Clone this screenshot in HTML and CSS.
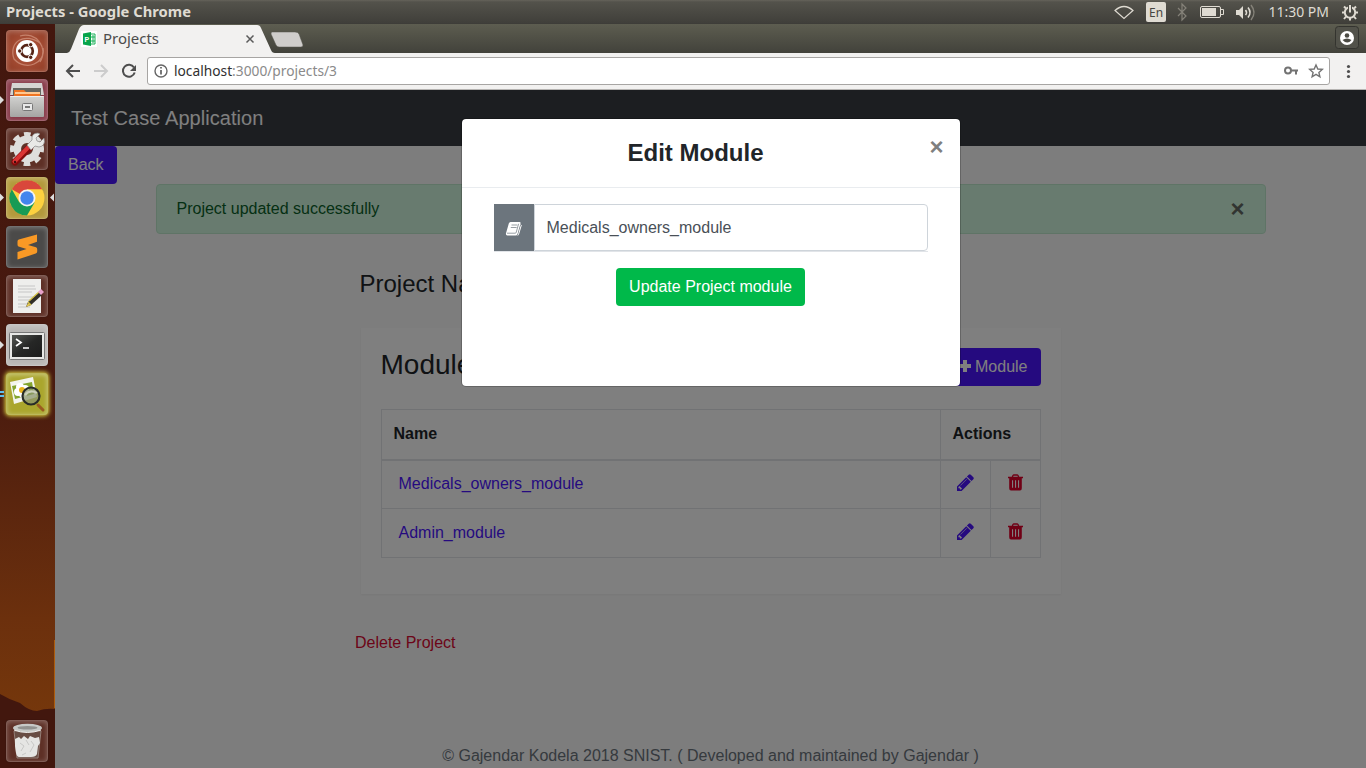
FILE: index.html
```html
<!DOCTYPE html>
<html lang="en">
<head>
<meta charset="utf-8">
<title>Projects</title>
<link rel="stylesheet" href="styles.css">
</head>
<body>
<svg class="defs" width="0" height="0" aria-hidden="true">
  <defs>
    <linearGradient id="steel" x1="0" y1="0" x2="0" y2="1"><stop offset="0" stop-color="#d2d2d0"/><stop offset="1" stop-color="#a5a5a3"/></linearGradient>
    <linearGradient id="term" x1="0" y1="0" x2="1" y2="1"><stop offset="0" stop-color="#555753"/><stop offset=".5" stop-color="#262726"/><stop offset="1" stop-color="#1c1c1c"/></linearGradient>
    <symbol id="pencil" viewBox="0 0 1536 1536"><path transform="translate(0,1408) scale(1,-1)" d="M363 0l91 91l-235 235l-91 -91v-107h128v-128h107zM886 928q0 22 -22 22q-10 0 -17 -7l-542 -542q-7 -7 -7 -17q0 -22 22 -22q10 0 17 7l542 542q7 7 7 17zM832 1120l416 -416l-832 -832h-416v416zM1515 1024q0 -53 -37 -90l-166 -166l-416 416l166 165q36 38 90 38q53 0 91 -38l235 -234q37 -39 37 -91z"/></symbol>
    <symbol id="bin" viewBox="0 0 15 17"><path d="M0 3.500h15M4.200 3.200L5 1.600q.2-.6 1-.6h3q.8 0 1 .6l.8 1.600" fill="none" stroke="#e0002b" stroke-width="1.300"/><path d="M1.200 4h12.600v10.200q0 2.300-1.800 2.300H3q-1.800 0-1.800-2.300zM4 6.200v7.600h1.100V6.200zm3 0v7.600h1.100V6.200zm3 0v7.600h1.100V6.200z" fill-rule="evenodd"/></symbol>
  </defs>
</svg>
<div class="desktop">
  <header class="panel">
    <span class="panel-title"><svg width="185" height="24"><text x="0" y="17" textLength="185" lengthAdjust="spacingAndGlyphs">Projects - Google Chrome</text></svg></span>
    <svg class="indicators" width="252" height="24" viewBox="1114 0 252 24" fill="none" stroke="#dfdbd2">
      <path d="M1115 10.500Q1124 2.500 1133 10.500L1124 18.500Z" stroke-width="1.200"/>
      <rect x="1146" y="2" width="20" height="20" rx="2" fill="#dfdbd2" stroke="none"/>
      <text class="lang" x="1149" y="17" textLength="14" lengthAdjust="spacingAndGlyphs">En</text>
      <path d="M1178 8l8 8-4 4V4l4 4-8 8" stroke="#858279" stroke-width="1.200"/>
      <rect x="1200.500" y="6.500" width="20" height="11" rx="1.500"/><rect x="1202" y="8" width="14" height="8" fill="#dfdbd2" stroke="none"/><path d="M1221 9.500h2.500v5H1221"/>
      <path d="M1236 10h3l4-4v13l-4-4h-3z" fill="#dfdbd2" stroke="none"/>
      <path d="M1245.500 10q2 2.500 0 5M1248 7.500q4 5 0 10" stroke-width="1.600"/><path d="M1251 5q6 7.500 0 15" stroke="#858279" stroke-width="1.500"/>
      <text class="clock" x="1268.500" y="17" textLength="60.500" lengthAdjust="spacingAndGlyphs">11:30 PM</text>
      <circle cx="1350" cy="12.500" r="5.200" stroke-width="2"/><path d="M1350 17.500v3M1346 16.500l-2 2.500M1354 16.500l2 2.500M1345 12.500h-3M1355 12.500h3M1346 8.500l-2-2M1354 8.500l2-2" stroke-width="2"/><path d="M1350 4.500v6" stroke="#4b4a44" stroke-width="4"/><path d="M1350 5v7.500" stroke-width="2"/>
    </svg>
  </header>
  <div class="workspace">
    <nav class="launcher" aria-label="Launcher">
      <svg class="mountain" width="55" height="744" viewBox="0 24 55 744"><path d="M0 694Q10 700 20 703Q29 711 37 711Q46 708 55 709V768H0Z" fill="#42170e"/><path d="M54.500 640V708" stroke="#ad5b0c"/></svg>
      <div class="tile ubuntu"><svg viewBox="0 0 42 42"><g fill="none" stroke="#e9b8a4" stroke-opacity=".5"><path d="M8 29C2 12 19 1 35 14M14 6C30 1 43 18 34 32M37 18C40 33 20 42 8 29" stroke-width="1.300"/></g><circle cx="21" cy="21" r="11" fill="#fff"/><circle cx="21" cy="21" r="5.800" fill="none" stroke="#562315" stroke-width="2.700"/><g fill="#562315" stroke="#fff"><circle cx="13.700" cy="21" r="2.200"/><circle cx="24.700" cy="14.700" r="2.200"/><circle cx="24.700" cy="27.300" r="2.200"/></g></svg></div>
      <div class="tile files"><svg viewBox="0 0 42 42"><path d="M6 4h30l2 12H4z" fill="#d5d5d3"/><path d="M7 9h28v9H7z" fill="#65655f"/><path d="M8 11h10l2 2h14v5H8z" fill="#ef7422"/><path d="M9 14h25" stroke="#ffc890" stroke-width="2"/><path d="M4 17h34v20q0 1-1 1H5q-1 0-1-1z" fill="url(#steel)"/><path d="M4.500 17.500h33" stroke="#eee"/><rect x="16.500" y="24.500" width="10" height="7" rx="1" fill="#e8e8e8" stroke="#777"/><path d="M19 28h5" stroke="#777" stroke-width="2"/></svg></div>
      <div class="tile settings"><svg viewBox="0 0 42 42"><circle cx="21" cy="21" r="14.800" fill="none" stroke="#dddddb" stroke-width="4.500" stroke-dasharray="6.500 5.124" transform="rotate(-13 21 21)"/><circle cx="21" cy="21" r="9.700" fill="none" stroke="#dededc" stroke-width="7.500"/><path d="M9 34L24 19" stroke="#830b0b" stroke-width="7" stroke-linecap="round"/><path d="M8.500 33.500L23 18.500" stroke="#da3434" stroke-width="4" stroke-linecap="round"/><path d="M21 17l5-5q-1-7 6-7l2 1-4 4 1 3 3 1 4-4q2 8-5 9l-4-1-4 4z" fill="#e9e9e7" stroke="#888" stroke-width=".7"/><circle cx="9" cy="34" r="1.200" fill="#3d0d0d"/></svg></div>
      <div class="tile chrome"><svg viewBox="0 0 42 42"><circle cx="21" cy="21" r="17.500" fill="#fdd13f"/><path d="M21 21L5.800 12.200A17.500 17.500 0 0 1 36.200 12.200H21z" fill="#d9473b"/><path d="M5.800 12.200A17.500 17.500 0 0 0 21 38.500L28.600 25.400 13.400 25.400z" fill="#179b55"/><circle cx="21" cy="21" r="8.500" fill="#f4f4f3"/><circle cx="21" cy="21" r="6.700" fill="#4285ed"/></svg></div>
      <div class="tile sublime"><svg viewBox="0 0 42 42"><path d="M11.500 15.500q0-1.400 1.300-1.900L31 8.500v7.300l-9 3.200 8 2.300q1.200.5 1.200 2v2.200q0 1.500-1.500 2.100L11.500 33.500V26l9-3-8-2.500q-1-.5-1-2z" fill="#f99925"/></svg></div>
      <div class="tile editor"><svg viewBox="0 0 42 42"><path d="M7 4h28v34H7z" fill="#eeeeec"/><path d="M12 11h17M12 14h18M12 17h14M12 22h17M12 25h16M12 29h13M12 32h12" stroke="#c6c6c6"/><path d="M20 32l2-5 11-10 3 3-11 10z" fill="#302d27"/><path d="M22 27l3 3M23 26l10-9" stroke="#d3bf44" stroke-width="1.300"/><path d="M20 32l2-4 3 2z" fill="#e2c653"/><path d="M32 17l3-3 3 3-3 3z" fill="#e8a2ca"/></svg></div>
      <div class="tile terminal"><svg viewBox="0 0 42 42"><rect x="3.500" y="8.500" width="35" height="27" rx="1" fill="#e7e7e5" stroke="#777"/><rect x="6" y="11" width="30" height="22" fill="url(#term)"/><path d="M10 15l5 3.500-5 3.500M17 24h6" fill="none" stroke="#fff" stroke-width="1.700"/></svg></div>
      <div class="tile viewer"><svg viewBox="0 0 42 42"><path d="M4 9l23-5 4 20-23 7z" fill="#f3f4ed"/><path d="M6 13l20-4 2 12-19 5z" fill="#84a52f"/><g fill="#fff"><circle cx="14" cy="14" r="4"/><circle cx="19" cy="16" r="4"/><circle cx="12" cy="19" r="4"/><circle cx="17" cy="21" r="4"/></g><circle cx="16" cy="17" r="3" fill="#e7b21b"/><path d="M32 32l5 5" stroke="#9a5b20" stroke-width="3" stroke-linecap="round"/><circle cx="25" cy="23" r="8.500" fill="#8b956e" fill-opacity=".75" stroke="#282c28" stroke-width="2.200"/><path d="M19 22q5-6 12-2" fill="none" stroke="#ccd0bb" stroke-width="2"/></svg></div>
      <div class="tile trash"><svg viewBox="0 0 42 42"><path d="M8 11h27l-3 27H11z" fill="#684d44" stroke="#947e76"/><path d="M9 19l4-2 2 2 3-3 4 3 2-3 5 2 4-1 1 6-2 3-1 8q-1 3-6 3H13q-2 0-3-4l-1-7z" fill="#e5e5e3"/><path d="M14 23l4 3-3 5M25 21l3 4-4 7M16 35l4-2M20 20l3 5" fill="none" stroke="#c8c8c6"/><ellipse cx="21.500" cy="8" rx="14.500" ry="4.200" fill="#c7c9c6"/><ellipse cx="21.500" cy="7.700" rx="10" ry="1.700" fill="#92928f"/><path d="M8 10q13 5 27 0" fill="none" stroke="#f0f0ee"/></svg></div>
      <svg class="markers" width="55" height="744" viewBox="0 24 55 744"><path fill="#dedede" d="M0 96l4 4-4 4zM0 193.500l4 4-4 4zM54 193.500l-4 4 4 4zM0 341l4 4-4 4z"/><path d="M0 391h4v2H0zM0 395h4v2H0z" fill="#5fc0f0"/></svg>
    </nav>
    <main class="browser">
      <div class="tabstrip">
        <svg width="1311" height="29" viewBox="55 24 1311 29"><path d="M67 53Q70 52 71 49L79 29Q81 25 84 25H257Q260 25 261 28L271 50Q272 53 275 53Z" fill="#f2f1f0"/><path d="M272 32H295Q298 32 299 34L303 45Q303 47 301 47H279Q277 47 276 45L271 34Q271 32 272 32Z" fill="#cfcdcb" stroke="#55554c" stroke-width=".5"/>
          <path d="M81 31h16v16H81z" fill="#fff"/><path d="M90 34h5v10h-5z" fill="#fff" stroke="#19af57"/><path d="M91 37h4M91 41h4M93 35v8" stroke="#19af57"/><path d="M83 33.500l8-1.500v14l-8-1.500z" fill="#08a54b"/><text class="fav-letter" x="84.500" y="42">P</text>
          <text class="tab-title" x="103" y="44" textLength="56" lengthAdjust="spacingAndGlyphs">Projects</text><path d="M246.500 35.500l7 7m0-7l-7 7" stroke="#5b5b5b" stroke-width="1.500"/>
          <rect x="1335.500" y="26.500" width="23" height="22" rx="3" fill="#52524a" stroke="#34342f"/><circle cx="1347" cy="38" r="7" fill="#fff"/><circle cx="1347" cy="35.500" r="2.300" fill="#4c4b44"/><path d="M1342.500 40q4.500-3 9 0-4 5-9 0" fill="#4c4b44"/></svg>
      </div>
      <div class="toolbar">
        <svg class="nav-icons" width="92" height="37" viewBox="55 53 92 37" fill="none" stroke="#4e4e4e" stroke-width="2"><path d="M80 71H67m6-6l-6 6 6 6"/><path d="M94 71h13m-6-6l6 6-6 6" stroke="#ccc"/><path d="M134 67.500a6 6 0 1 0 .7 5"/><path d="M136 65v6h-6z" fill="#4e4e4e" stroke="none"/></svg>
        <div class="address">
          <svg width="1180" height="26" viewBox="148 58 1180 26"><circle cx="161" cy="71" r="6" fill="none" stroke="#666" stroke-width="1.400"/><path d="M161 70v4.500M161 67v1.600" stroke="#555" stroke-width="1.600"/><text class="url" x="174" y="76" textLength="163" lengthAdjust="spacingAndGlyphs"><tspan class="host">localhost</tspan>:3000/projects/3</text><path fill="none" stroke="#737373" stroke-width="2" d="M1291 70.500h7m-2 0v4m-5-4a3 3 0 1 1-6 0a3 3 0 0 1 6 0"/><path d="M1316 65l1.800 4 4.500.4-3.400 3 1 4.400-3.900-2.400-3.900 2.400 1-4.400-3.400-3 4.500-.4z" fill="none" stroke="#737373" stroke-width="1.400"/></svg>
        </div>
        <svg class="menu" width="36" height="37"><circle cx="18.500" cy="13.500" r="1.600"/><circle cx="18.500" cy="18.500" r="1.600"/><circle cx="18.500" cy="23.500" r="1.600"/></svg>
      </div>
      <section class="page">
        <div class="navbar">Test Case Application</div>
        <a class="button back">Back</a>
        <div class="alert"><span>Project updated successfully</span><b>×</b></div>
        <h4 class="project-name">Project Name</h4>
        <div class="card">
          <div class="card-head"><h3>Modules</h3><a class="button add"><svg width="13" height="14"><path d="M4 0h4v4h4v4H8v4H4V8H0V4h4z" fill="#fff"/></svg>Module</a></div>
          <table class="modules">
            <thead><tr><th class="name-col">Name</th><th colspan="2">Actions</th></tr></thead>
            <tbody>
              <tr><td><a>Medicals_owners_module</a></td><td class="action"><svg class="edit" width="17" height="17"><use href="#pencil"/></svg></td><td class="action"><svg class="delete" width="15" height="17"><use href="#bin"/></svg></td></tr>
              <tr><td><a>Admin_module</a></td><td class="action"><svg class="edit" width="17" height="17"><use href="#pencil"/></svg></td><td class="action"><svg class="delete" width="15" height="17"><use href="#bin"/></svg></td></tr>
            </tbody>
          </table>
        </div>
        <a class="delete-project">Delete Project</a>
        <footer>© Gajendar Kodela 2018 SNIST. ( Developed and maintained by Gajendar )</footer>
        <div class="backdrop">
          <div class="modal" role="dialog">
            <div class="modal-head"><h4>Edit Module</h4><button class="close" aria-label="Close">×</button></div>
            <div class="modal-body">
              <div class="field"><span class="field-icon"><svg width="17" height="16" viewBox="0 0 17 16"><path d="M5.500 1h9q1.400 0 1 1.400L12.500 13q-.4 1.500-2 1.500H2.300Q.5 14 1 12.200L3.800 2.500Q4.300 1 5.500 1z" fill="#fff"/><path d="M6.500 4h5.800M5.800 6.500h5.800M2 12.200h8.200q.8 0 1-.8L13.600 2.800" fill="none" stroke="#6c757d" stroke-width=".7"/><path d="M15.600 3.500l.7.700-2.700 9-.8 1.300" stroke="#fff" fill="none"/></svg></span><input value="Medicals_owners_module" aria-label="Module name"></div>
              <button class="update">Update Project module</button>
            </div>
          </div>
        </div>
      </section>
    </main>
  </div>
</div>
</body>
</html>
```
FILE: styles.css
```css
* { box-sizing: border-box; }
body { margin: 0; overflow: hidden; font: 16px/24px "Liberation Sans", Arial, sans-serif; color: #212529; }
h3, h4 { margin: 0; font-weight: 400; }
.defs { position: absolute; }
.desktop { width: 1366px; height: 768px; display: flex; flex-direction: column; background: #3c160e; }
.panel { height: 24px; padding-left: 6px; display: flex; justify-content: space-between; background: linear-gradient(#65635a 0, #53524b 2px, #403f3a 23px, #3c3b37); font-family: "Noto Sans", sans-serif; }
.panel svg { display: block; }
.panel-title text { fill: #dfdbd2; font-size: 14px; font-weight: 700; }
.panel text { stroke: none; }
.clock { fill: #dfdbd2; font-size: 14px; }
.lang { fill: #454440; font-size: 13px; }
.workspace { display: flex; height: 744px; }
.launcher { position: relative; width: 55px; padding: 6px 0 6px 6px; display: flex; flex-direction: column; gap: 7px; background: linear-gradient(#43170e, #481a0f 48%, #6c300d 80%, #7a3b0b); }
.mountain, .markers { position: absolute; left: 0; top: 0; }
.tile { position: relative; width: 42px; height: 42px; border: 1px solid #ffffff38; border-radius: 4px; box-shadow: inset 0 1px 5px #ffffff45, 0 0 1px #0008; }
.tile svg { display: block; width: 42px; height: 42px; margin: -1px; }
.ubuntu { background: radial-gradient(#b75b42, #8f3b24); }
.files { background: #873847; }
.settings, .editor, .trash { background: #5e3026; }
.chrome { background: #b39a3c; }
.sublime { background: #4b4a49; }
.terminal { background: #b9b7b5; }
.viewer { background: #aaa62d; box-shadow: 0 0 4px 1px #e4df43, inset 0 1px 5px #fff6; }
.trash { margin-top: auto; }
.browser { flex: 1; min-width: 0; display: flex; flex-direction: column; }
.tabstrip { height: 29px; background: linear-gradient(#5d5d50, #42423b); }
.tabstrip svg, .address svg { display: block; }
.tabstrip text, .address text { font-family: "Noto Sans", sans-serif; font-size: 14px; }
.tabstrip .fav-letter { font: 700 7px "Liberation Sans", sans-serif; fill: #fff; }
.tab-title { fill: #4c4c4c; }
.toolbar { height: 37px; display: flex; background: #f2f1f0; border-bottom: 1px solid #b6b4b2; }
.address { width: 1183px; height: 28px; margin-top: 4px; border: 1px solid #a7a5a3; border-radius: 3px; background: #fff; overflow: hidden; }
.url { fill: #8a8a8a; }
.host { fill: #303030; }
.menu { fill: #4e4e4e; }
.page { position: relative; height: 678px; background: #fafafa; overflow: hidden; display: flex; flex-direction: column; align-items: flex-start; }
.navbar { width: 100%; height: 56px; padding: 13px 16px; background: #393c43; color: #fff; font-size: 20px; line-height: 30px; letter-spacing: .06px; }
.button { display: flex; align-items: center; height: 38px; padding: 0 13px; border-radius: 4px; background: #4b14ff; color: #fff; }
.alert { width: 1110px; height: 50px; margin-left: 101px; padding: 0 20.5px 0 19.5px; border: 1px solid #bfe9cd; border-radius: 4px; display: flex; justify-content: space-between; align-items: center; background: #d1f7df; color: #0a6029; }
.alert b { color: #636963; font-size: 24px; }
.project-name { margin: 35px 0 0 304.5px; font-size: 24px; line-height: 29px; }
.card { width: 700px; height: 266px; margin: 30px 0 0 306px; padding: 20px; background: #fff; box-shadow: 0 1px 2px #0000000d; }
.card-head { height: 61px; display: flex; justify-content: space-between; }
.card h3 { margin-left: -.5px; font-size: 28px; line-height: 34px; }
.add { gap: 3.500px; padding-right: 13.5px; }
.modules { width: 660px; table-layout: fixed; border-collapse: collapse; }
.modules th, .modules td { border: 1px solid #e2e5e8; height: 49px; padding: 0 11.5px; text-align: left; }
.modules th { height: 50px; border-bottom-width: 2px; }
.name-col { width: 559px; }
.modules a { color: #4b14ff; padding-left: 5px; }
.modules .action { width: 50px; padding: 0 1px 4px 0; text-align: center; line-height: 0; }
.edit { fill: #4b14ff; }
.delete { fill: #e0002b; }
.delete-project { margin: 37px 0 0 300px; color: #d90a32; }
footer { width: 100%; margin-top: 89px; text-align: center; color: #6c757d; }
.backdrop { position: absolute; inset: 0; padding-top: 28px; background: rgba(0,0,0,.5); }
.modal { width: 500px; height: 269px; margin: 0 auto; border: 1px solid rgba(0,0,0,.2); border-radius: 5px; background: #fff; background-clip: padding-box; overflow: hidden; }
.modal-head { position: relative; height: 69px; padding: 19px 30px 0 0; border-bottom: 1px solid #e9ecef; text-align: center; }
.modal-head h4 { font-size: 24px; line-height: 29px; font-weight: 700; }
.close { position: absolute; right: 16px; top: 14px; padding: 0; border: 0; background: none; color: #7f7f7f; font: 700 24px/28px "Liberation Sans", sans-serif; }
.modal-body { padding: 16px 32px; display: flex; flex-direction: column; align-items: center; gap: 16px; }
.field { width: 434px; height: 48px; display: flex; border-bottom: 1px solid #e1e4e8; }
.field-icon { width: 40px; padding: 3px 0 0; display: flex; align-items: center; justify-content: center; background: #6c757d; }
.field input { flex: 1; min-width: 0; padding: 0 12px; border: 1px solid #ced4da; border-radius: 0 4px 4px 0; outline: 0; background: #fff; color: #495057; font: 16px "Liberation Sans", sans-serif; }
.update { height: 38px; padding: 0 13px; border: 0; border-radius: 4px; background: #00b94a; color: #fff; font: 16px "Liberation Sans", sans-serif; }
```
